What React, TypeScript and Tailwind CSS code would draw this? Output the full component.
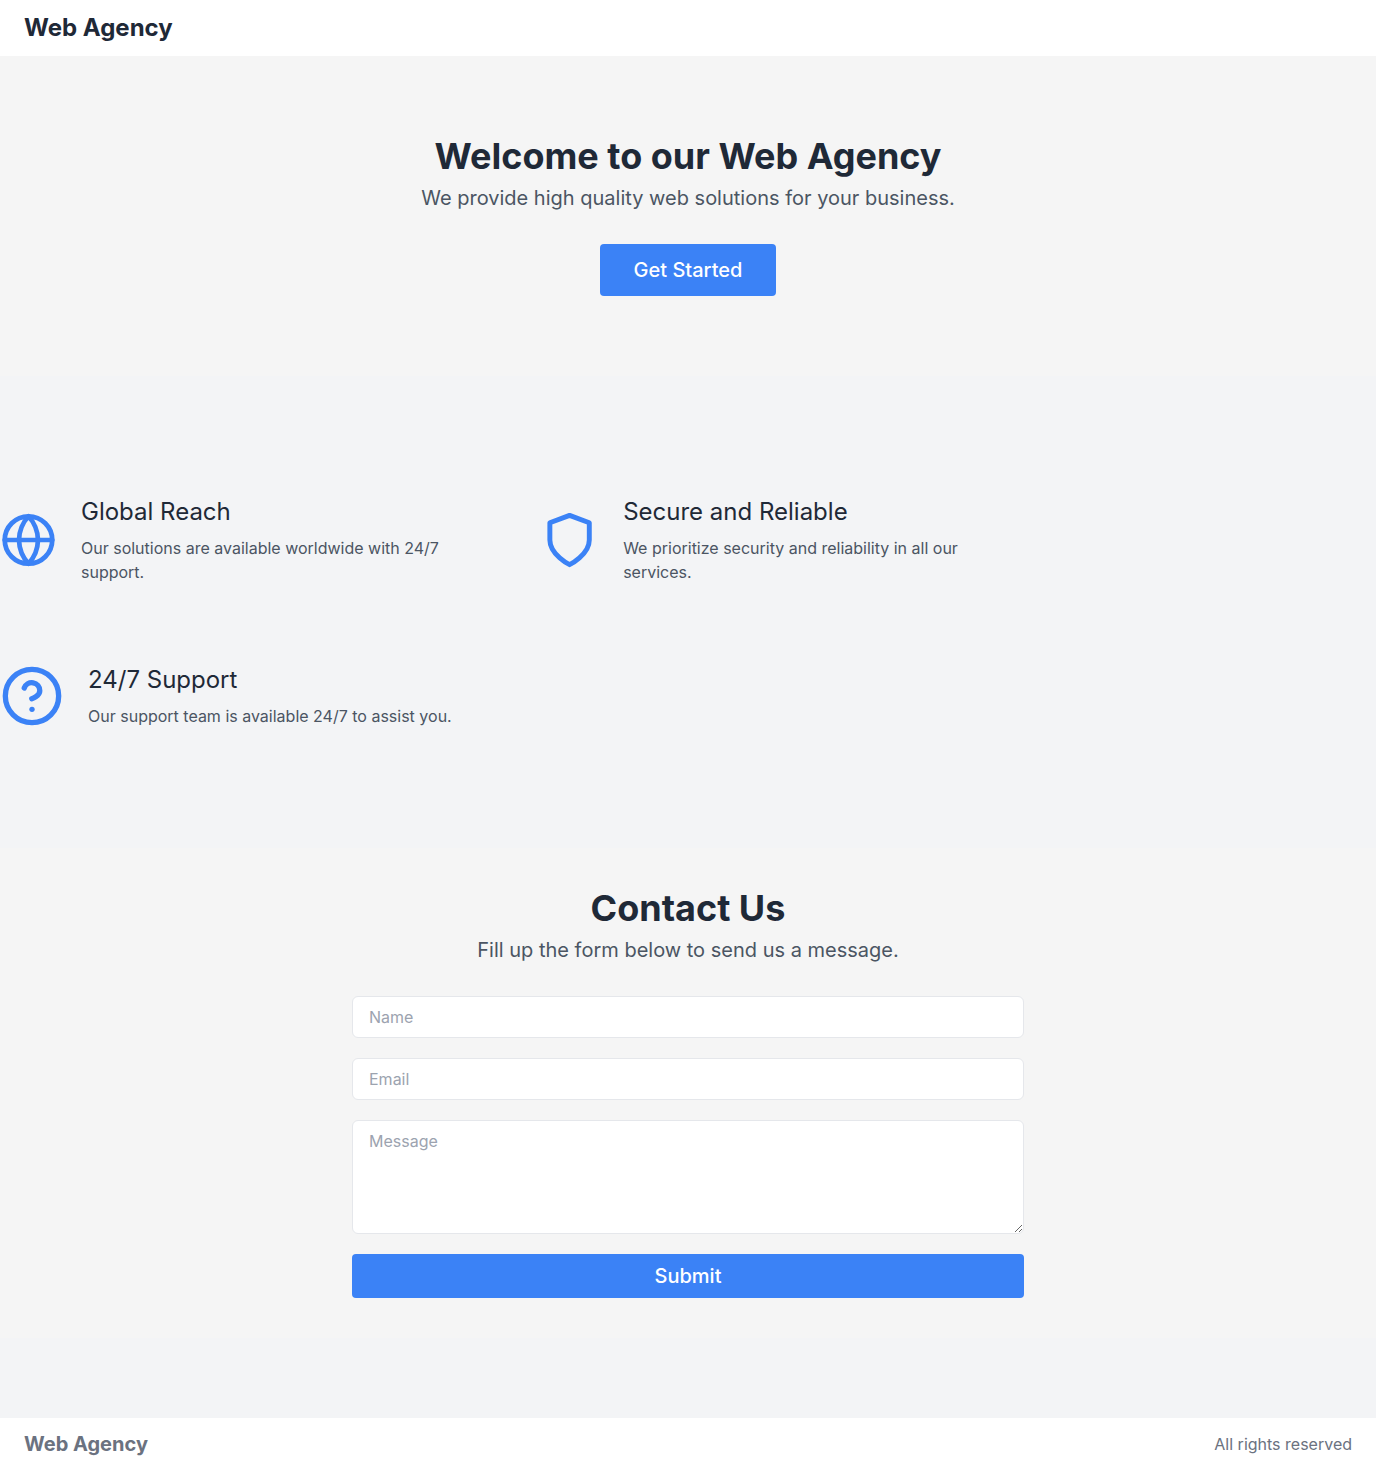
import type { ReactNode } from "react";

type FeatureProps = { icon: ReactNode; title: string; text: string };

function Feature({ icon, title, text }: FeatureProps) {
  return (
    <div className="flex items-center">
      {icon}
      <div className="ml-6">
        <h3 className="text-2xl text-[#1f2937]">{title}</h3>
        <p className="mt-2 text-base text-[#4b5563]">{text}</p>
      </div>
    </div>
  );
}

function Icon({ children }: { children: ReactNode }) {
  return (
    <svg
      className="size-16 text-[#3b82f6]"
      viewBox="0 0 24 24"
      fill="none"
      stroke="currentColor"
      strokeWidth="2"
      strokeLinecap="round"
      strokeLinejoin="round"
      aria-hidden="true"
    >
      {children}
    </svg>
  );
}

const fieldClass =
  "block w-full rounded-md border border-[#e5e7eb] bg-white px-4 py-2 text-base text-[#1f2937] placeholder:text-[#9ca3af]";

export default function App() {
  return (
    <div className="flex min-h-screen flex-col bg-[#f3f4f6] font-['Inter',sans-serif]">
      <header className="bg-white px-6 py-3">
        <h1 className="text-2xl font-bold text-[#1f2937]">Web Agency</h1>
      </header>

      <main>
        <section className="bg-[#f5f5f5] px-6 py-20 text-center">
          <h2 className="text-4xl font-bold text-[#1f2937]">Welcome to our Web Agency</h2>
          <p className="mt-2 text-xl text-[#4b5563]">We provide high quality web solutions for your business.</p>
          <button type="button" className="mt-8 rounded bg-[#3b82f6] px-[34px] py-3 text-xl font-medium text-white">
            Get Started
          </button>
        </section>

        <section className="py-20">
          <div className="grid max-w-[1000px] grid-cols-2 gap-20 py-10">
            <Feature
              icon={
                <Icon>
                  <circle cx="12" cy="12" r="10" />
                  <path d="M2 12h20" />
                  <path d="M12 2a15.3 15.3 0 0 1 4 10 15.3 15.3 0 0 1-4 10 15.3 15.3 0 0 1-4-10 15.3 15.3 0 0 1 4-10z" />
                </Icon>
              }
              title="Global Reach"
              text="Our solutions are available worldwide with 24/7 support."
            />
            <Feature
              icon={
                <Icon>
                  <path d="M12 22s8-4 8-10V5l-8-3-8 3v7c0 6 8 10 8 10z" />
                </Icon>
              }
              title="Secure and Reliable"
              text="We prioritize security and reliability in all our services."
            />
            <Feature
              icon={
                <Icon>
                  <circle cx="12" cy="12" r="10" />
                  <path d="M9.09 9a3 3 0 0 1 5.83 1c0 2-3 3-3 3" />
                  <path d="M12 17h.01" />
                </Icon>
              }
              title="24/7 Support"
              text="Our support team is available 24/7 to assist you."
            />
          </div>
        </section>

        <section className="bg-[#f5f5f5] px-6 py-10 text-center">
          <h2 className="text-4xl font-bold text-[#1f2937]">Contact Us</h2>
          <p className="mt-2 text-xl text-[#4b5563]">Fill up the form below to send us a message.</p>
          <form className="mx-auto mt-8 flex max-w-2xl flex-col gap-5">
            <input type="text" aria-label="Name" placeholder="Name" className={fieldClass} />
            <input type="email" aria-label="Email" placeholder="Email" className={fieldClass} />
            <textarea aria-label="Message" placeholder="Message" rows={4} className={fieldClass} />
            <button type="button" className="rounded bg-[#3b82f6] py-2 text-xl font-medium text-white">
              Submit
            </button>
          </form>
        </section>
      </main>

      <footer className="mt-auto flex items-center justify-between bg-white px-6 py-3">
        <span className="text-xl font-bold text-[#6b7280]">Web Agency</span>
        <span className="text-base text-[#6b7280]">All rights reserved</span>
      </footer>
    </div>
  );
}
